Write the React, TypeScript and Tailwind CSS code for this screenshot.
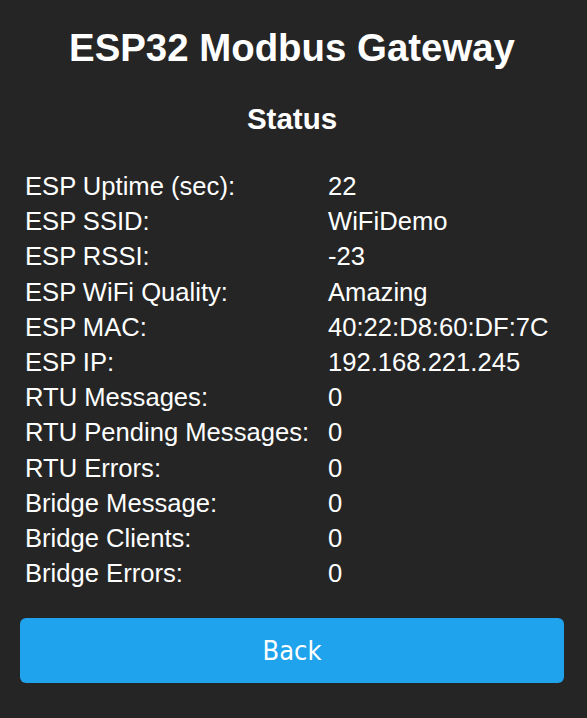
const rows: [string, string][] = [
  ['ESP Uptime (sec):', '22'],
  ['ESP SSID:', 'WiFiDemo'],
  ['ESP RSSI:', '-23'],
  ['ESP WiFi Quality:', 'Amazing'],
  ['ESP MAC:', '40:22:D8:60:DF:7C'],
  ['ESP IP:', '192.168.221.245'],
  ['RTU Messages:', '0'],
  ['RTU Pending Messages:', '0'],
  ['RTU Errors:', '0'],
  ['Bridge Message:', '0'],
  ['Bridge Clients:', '0'],
  ['Bridge Errors:', '0'],
];

export default function App() {
  return (
    <div className="min-h-[718px] bg-[#252525] text-white font-['Liberation_Sans',Arial,sans-serif]">
      <div className="w-[544px] ml-[20px] pt-[26px]">
        <h1 className="text-center text-[38.4px] leading-[44px] font-bold">ESP32 Modbus Gateway</h1>
        <h2 className="mt-[32px] text-center text-[29.5px] leading-[34px] font-bold">Status</h2>
        <div className="mt-[33px] pl-[5px]">
          {rows.map(([label, value]) => (
            <div key={label} className="flex h-[35.2px] items-center text-[25.6px] leading-[35px]">
              <span className="w-[303px] shrink-0">{label}</span>
              <span>{value}</span>
            </div>
          ))}
        </div>
        <button className="mt-[27px] w-full h-[65px] rounded-[6px] bg-[#1fa3ec] text-white text-[27px] font-['DejaVu_Sans_Condensed','DejaVu_Sans',sans-serif]">
          Back
        </button>
      </div>
    </div>
  );
}
